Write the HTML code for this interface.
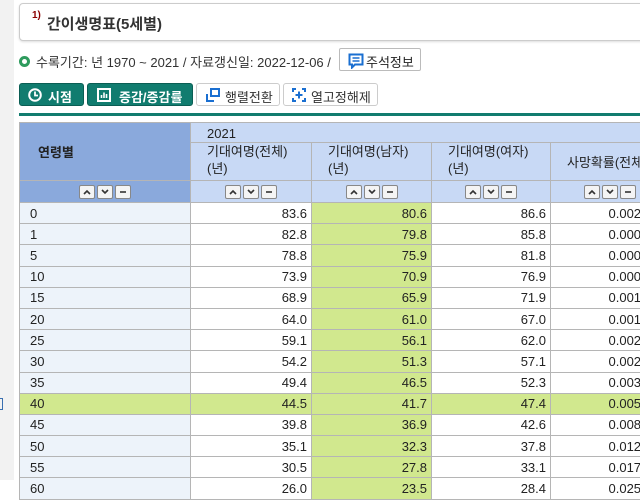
<!DOCTYPE html>
<html><head><meta charset="utf-8"><style>
*{margin:0;padding:0;box-sizing:border-box}
body{width:640px;height:480px;overflow:hidden;background:#fff;font-family:"Liberation Sans","Noto Sans CJK KR",sans-serif;font-size:13px;color:#222;position:relative}
.strip{position:absolute;left:0;top:0;width:14px;height:480px;background:#f2f2f2}
.mark{position:absolute;left:0;top:398px;width:3px;height:12px;border:1px solid #3a6fb0;border-left:none}
.title{position:absolute;left:19px;top:3px;width:640px;height:38px;border:1px solid #ccc;border-radius:4px;background:#fff;box-shadow:0 1px 2px #ddd}
.title span{position:absolute;left:27px;top:9px;font-size:15px;font-weight:bold;color:#333}
.title sup{position:absolute;left:12px;top:6px;font-size:10px;font-weight:bold;color:#8b0000}
.info{position:absolute;left:19px;top:52px;font-size:13px;color:#333;display:flex;align-items:center}
.dot{width:11px;height:11px;border-radius:50%;border:3px solid #2e9b5d;margin-right:6px;background:#fff}
.nb{position:absolute;left:339px;top:48px;width:82px;height:23px;border:1px solid #bbb;border-radius:2px;background:#fff;font-size:13px;padding:3px 0 0 26px}
.nb svg{position:absolute;left:8px;top:4px}
.btn{position:absolute;top:83px;height:23px;border-radius:3px;font-size:13px;font-weight:bold;padding-top:3px}
.btn svg{position:absolute;top:4px}
.g{background:#117c6f;color:#fff;border:1px solid #0b5e54}
.w{background:#fff;color:#333;border:1px solid #ccc;font-weight:normal}
.line{position:absolute;left:19px;top:113px;width:621px;height:3px;background:#117c6f}
table{position:absolute;left:19px;top:122px;border-collapse:collapse;table-layout:fixed;width:626px}
td,th{border:1px solid #b5b5b5;font-weight:normal;font-size:13px;padding:0 4px;overflow:hidden;white-space:nowrap}
.h1{background:#8aa9dc;font-weight:bold;text-align:left;padding-left:18px}
.h{background:#c8d9f5;text-align:left;padding-left:16px;vertical-align:top}
tbody td{height:21.2px;text-align:right}
tbody td:first-child{background:#edf3fa;text-align:left;padding-left:10px}
tbody td:nth-child(3){background:#d1e88e}
tr.sel td{background:#d1e88e!important}
.ctl{display:inline-block;width:16px;height:14px;border:1px solid #888;border-radius:2px;background:#f4f4f4;margin:0 1px;vertical-align:middle;position:relative}
.ctl svg{position:absolute;left:3px;top:3px}
</style></head><body>
<svg width="0" height="0" style="position:absolute"><defs>
<symbol id="up" viewBox="0 0 8 6"><path d="M1 5L4 2L7 5" fill="none" stroke="#333" stroke-width="1.6"/></symbol>
<symbol id="dn" viewBox="0 0 8 6"><path d="M1 1L4 4L7 1" fill="none" stroke="#333" stroke-width="1.6"/></symbol>
<symbol id="mi" viewBox="0 0 8 6"><path d="M1 3H7" fill="none" stroke="#333" stroke-width="1.6"/></symbol>
</defs></svg>
<div class="strip"></div><div class="mark"></div>
<div class="title"><sup>1)</sup><span>간이생명표(5세별)</span></div>
<div class="info"><div class="dot"></div>수록기간: 년 1970 ~ 2021 / 자료갱신일: 2022-12-06 /</div>
<div class="nb"><svg width="16" height="16" viewBox="0 0 16 16"><path d="M1.5 1.5H14.5V11.5H7L4 14.5V11.5H1.5Z" fill="none" stroke="#1a6fd1" stroke-width="2"/><path d="M4.5 5H11.5M4.5 8H11.5" stroke="#1a6fd1" stroke-width="1.5"/></svg>주석정보</div>
<div class="btn g" style="left:19px;width:65px;padding-left:28px"><svg style="left:8px" width="14" height="14" viewBox="0 0 14 14"><circle cx="7" cy="7" r="5.8" fill="none" stroke="#fff" stroke-width="2"/><path d="M7 3.5V7.5H10" fill="none" stroke="#fff" stroke-width="1.8"/></svg>시점</div>
<div class="btn g" style="left:87px;width:106px;padding-left:31px"><svg style="left:9px" width="14" height="14" viewBox="0 0 14 14"><rect x="1" y="1" width="12" height="12" fill="none" stroke="#fff" stroke-width="2"/><path d="M4.5 10V7M7 10V4.5M9.5 10V6" stroke="#fff" stroke-width="1.6"/></svg>증감/증감률</div>
<div class="btn w" style="left:196px;width:84px;padding-left:28px"><svg style="left:9px" width="14" height="14" viewBox="0 0 14 14"><rect x="5" y="1" width="8" height="7" fill="none" stroke="#1a6fd1" stroke-width="2"/><path d="M1 6V13H8" fill="none" stroke="#1a6fd1" stroke-width="2"/></svg>행렬전환</div>
<div class="btn w" style="left:283px;width:95px;padding-left:27px"><svg style="left:8px" width="14" height="14" viewBox="0 0 14 14"><path d="M1 4V1H4M10 1H13V4M13 10V13H10M4 13H1V10" fill="none" stroke="#1a6fd1" stroke-width="2"/><path d="M7 3.5V10.5M3.5 7H10.5" stroke="#1a6fd1" stroke-width="2"/></svg>열고정해제</div>
<div class="line"></div>
<table>
<colgroup><col style="width:171px"><col style="width:121px"><col style="width:120px"><col style="width:119px"><col style="width:95px"></colgroup>
<thead>
<tr style="height:20px"><th class="h1" rowspan="2">연령별</th><th class="h" colspan="4" style="border-bottom:none;padding-top:3px">2021</th></tr>
<tr style="height:38px"><th class="h" style="line-height:17px">기대여명(전체)<br>(년)</th><th class="h" style="line-height:17px">기대여명(남자)<br>(년)</th><th class="h" style="line-height:17px">기대여명(여자)<br>(년)</th><th class="h" style="vertical-align:middle">사망확률(전체)</th></tr>
<tr style="height:22px">
<th class="h1" style="text-align:center;padding:0"><span class="ctl"><svg width="8" height="6"><use href="#up"/></svg></span><span class="ctl"><svg width="8" height="6"><use href="#dn"/></svg></span><span class="ctl"><svg width="8" height="6"><use href="#mi"/></svg></span></th>
<th class="h" style="text-align:center;padding:0;vertical-align:middle"><span class="ctl"><svg width="8" height="6"><use href="#up"/></svg></span><span class="ctl"><svg width="8" height="6"><use href="#dn"/></svg></span><span class="ctl"><svg width="8" height="6"><use href="#mi"/></svg></span></th>
<th class="h" style="text-align:center;padding:0;vertical-align:middle"><span class="ctl"><svg width="8" height="6"><use href="#up"/></svg></span><span class="ctl"><svg width="8" height="6"><use href="#dn"/></svg></span><span class="ctl"><svg width="8" height="6"><use href="#mi"/></svg></span></th>
<th class="h" style="text-align:center;padding:0;vertical-align:middle"><span class="ctl"><svg width="8" height="6"><use href="#up"/></svg></span><span class="ctl"><svg width="8" height="6"><use href="#dn"/></svg></span><span class="ctl"><svg width="8" height="6"><use href="#mi"/></svg></span></th>
<th class="h" style="text-align:left;padding:0 0 0 32px;vertical-align:middle"><span class="ctl"><svg width="8" height="6"><use href="#up"/></svg></span><span class="ctl"><svg width="8" height="6"><use href="#dn"/></svg></span><span class="ctl"><svg width="8" height="6"><use href="#mi"/></svg></span></th></tr>
</thead>
<tbody>
<tr><td>0</td><td>83.6</td><td>80.6</td><td>86.6</td><td>0.002</td></tr>
<tr><td>1</td><td>82.8</td><td>79.8</td><td>85.8</td><td>0.000</td></tr>
<tr><td>5</td><td>78.8</td><td>75.9</td><td>81.8</td><td>0.000</td></tr>
<tr><td>10</td><td>73.9</td><td>70.9</td><td>76.9</td><td>0.000</td></tr>
<tr><td>15</td><td>68.9</td><td>65.9</td><td>71.9</td><td>0.001</td></tr>
<tr><td>20</td><td>64.0</td><td>61.0</td><td>67.0</td><td>0.001</td></tr>
<tr><td>25</td><td>59.1</td><td>56.1</td><td>62.0</td><td>0.002</td></tr>
<tr><td>30</td><td>54.2</td><td>51.3</td><td>57.1</td><td>0.002</td></tr>
<tr><td>35</td><td>49.4</td><td>46.5</td><td>52.3</td><td>0.003</td></tr>
<tr class="sel"><td>40</td><td>44.5</td><td>41.7</td><td>47.4</td><td>0.005</td></tr>
<tr><td>45</td><td>39.8</td><td>36.9</td><td>42.6</td><td>0.008</td></tr>
<tr><td>50</td><td>35.1</td><td>32.3</td><td>37.8</td><td>0.012</td></tr>
<tr><td>55</td><td>30.5</td><td>27.8</td><td>33.1</td><td>0.017</td></tr>
<tr><td>60</td><td>26.0</td><td>23.5</td><td>28.4</td><td>0.025</td></tr>
</tbody></table>
</body></html>
